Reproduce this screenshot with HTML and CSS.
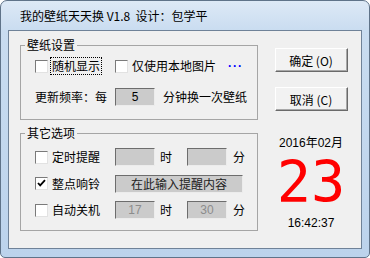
FILE: index.html
```html
<!DOCTYPE html>
<html lang="zh-CN">
<head>
  <meta charset="UTF-8" />
  <title>我的壁纸天天换</title>
  <link rel="stylesheet" href="styles.css">
</head>
<body>
  <div class="window">
    <div class="titlebar">我的壁纸天天换 V1.8&nbsp;&nbsp;设计：包学平</div>

    <div class="client">
      <div class="left">
        <!-- wallpaper settings -->
        <fieldset class="group group-wallpaper">
          <legend>壁纸设置</legend>
          <div class="group-body">
            <div class="row">
              <label class="check col-first"><span class="box"></span><span class="focus">随机显示</span></label>
              <label class="check"><span class="box"></span>仅使用本地图片</label>
              <span class="more">···</span>
            </div>
            <div class="row">
              <span class="col-first">更新频率：每</span>
              <span class="field">5</span>
              <span class="unit-long">分钟换一次壁纸</span>
            </div>
          </div>
        </fieldset>

        <!-- other options -->
        <fieldset class="group group-other">
          <legend>其它选项</legend>
          <div class="group-body">
            <div class="row">
              <label class="check col-first"><span class="box"></span>定时提醒</label>
              <span class="field"></span>
              <span class="unit">时</span>
              <span class="field"></span>
              <span class="unit-end">分</span>
            </div>
            <div class="row">
              <label class="check col-first">
                <span class="box">
                  <svg width="11" height="11" viewBox="0 0 11 11"><path d="M2 5 L4.2 7.4 L9 2.2" fill="none" stroke="#000" stroke-width="1.8"/></svg>
                </span>整点响铃
              </label>
              <span class="field wide">在此输入提醒内容</span>
            </div>
            <div class="row">
              <label class="check col-first"><span class="box"></span>自动关机</label>
              <span class="field dim">17</span>
              <span class="unit">时</span>
              <span class="field dim">30</span>
              <span class="unit-end">分</span>
            </div>
          </div>
        </fieldset>
      </div>

      <div class="side">
        <button class="btn">确定 (O)</button>
        <button class="btn btn-cancel">取消 (C)</button>
        <div class="date">2016年02月</div>
        <div class="day">23</div>
        <div class="time">16:42:37</div>
      </div>
    </div>
  </div>
</body>
</html>
```

FILE: styles.css
```css
body {
  margin: 0;
  font-family: "Noto Sans CJK SC", sans-serif;
  font-size: 12px;
  color: #000;
}

.window {
  width: 370px;
  height: 258px;
  box-sizing: border-box;
  border: 1px solid #5f7389;
  border-radius: 7px 7px 5px 5px;
  background: linear-gradient(#dde9f6, #c9dcf0 30px, #bcd3ec);
  padding: 0 7px 8px;
  display: flex;
  flex-direction: column;
}

.titlebar {
  height: 29px;
  line-height: 29px;
  padding-left: 12px;
}

.client {
  flex: 1;
  display: flex;
  border: 1px solid #6f8298;
  background-color: #f0f0f0;
  padding: 7px 0 0 11px;
}

.left {
  width: 238px;
  display: flex;
  flex-direction: column;
  gap: 6px;
}

.group {
  margin: 0;
  padding: 0;
  min-width: 0;
  box-sizing: border-box;
  border: 1px solid #a5a5a5;
}

.group legend {
  margin-left: 4px;
  padding: 0 2px;
  line-height: 14px;
}

.group-wallpaper {
  height: 82px;
}

.group-other {
  height: 105px;
}

.group-body {
  display: flex;
  flex-direction: column;
  padding-left: 14px;
}

.group-wallpaper .group-body {
  padding-top: 5px;
  gap: 13px;
}

.group-other .group-body {
  padding-top: 8px;
  gap: 8.5px;
}

.row {
  display: flex;
  align-items: center;
  height: 18px;
  line-height: 18px;
}

.col-first {
  width: 80px;
  flex-shrink: 0;
}

.check {
  display: flex;
  align-items: center;
  gap: 4px;
}

.box {
  width: 13px;
  height: 13px;
  box-sizing: border-box;
  background-color: #fff;
  border: 1px solid;
  border-color: #7a7a7a #e2e2e2 #e2e2e2 #7a7a7a;
  display: flex;
  align-items: center;
  justify-content: center;
}

.focus {
  outline: 1px dotted #000;
  line-height: 16px;
  padding: 0 1px;
  margin-left: -1px;
}

.more {
  margin-left: 12px;
  color: #0000ff;
  font-family: "Liberation Sans", sans-serif;
  font-weight: bold;
  letter-spacing: 1px;
}

.field {
  box-sizing: border-box;
  width: 40px;
  height: 18px;
  line-height: 16px;
  flex-shrink: 0;
  background-color: #cbcbcb;
  border: 1px solid;
  border-color: #6d6d6d #ececec #ececec #6d6d6d;
  text-align: center;
  font-family: "Liberation Sans", "Noto Sans CJK SC", sans-serif;
}

.field.wide {
  width: 128px;
  font-family: "Noto Sans CJK SC", sans-serif;
  color: #222;
}

.field.dim {
  color: #8c8c8c;
}

.unit {
  width: 32px;
  padding-left: 5px;
  box-sizing: border-box;
}

.unit-end {
  margin-left: 6px;
}

.unit-long {
  margin-left: 8px;
}

.side {
  flex: 1;
  display: flex;
  flex-direction: column;
  align-items: center;
  padding: 10px 0 0 3px;
}

.btn {
  box-sizing: border-box;
  width: 73px;
  height: 24px;
  padding: 0;
  font: inherit;
  background-color: #f2f2f2;
  border: 1px solid;
  border-color: #fff #6a6a6a #6a6a6a #fff;
  box-shadow: inset -1px -1px 0 #a8a8a8;
}

.btn-cancel {
  margin-top: 15px;
}

.date {
  margin-top: 23px;
  line-height: 18px;
  font-family: "Liberation Sans", "Noto Sans CJK SC", sans-serif;
}

.day {
  margin-top: 2px;
  font-family: "DejaVu Sans Mono", monospace;
  font-size: 57px;
  line-height: 57px;
  color: #ff0000;
}

.time {
  margin-top: 3px;
  line-height: 18px;
  font-family: "Liberation Sans", sans-serif;
}
```
